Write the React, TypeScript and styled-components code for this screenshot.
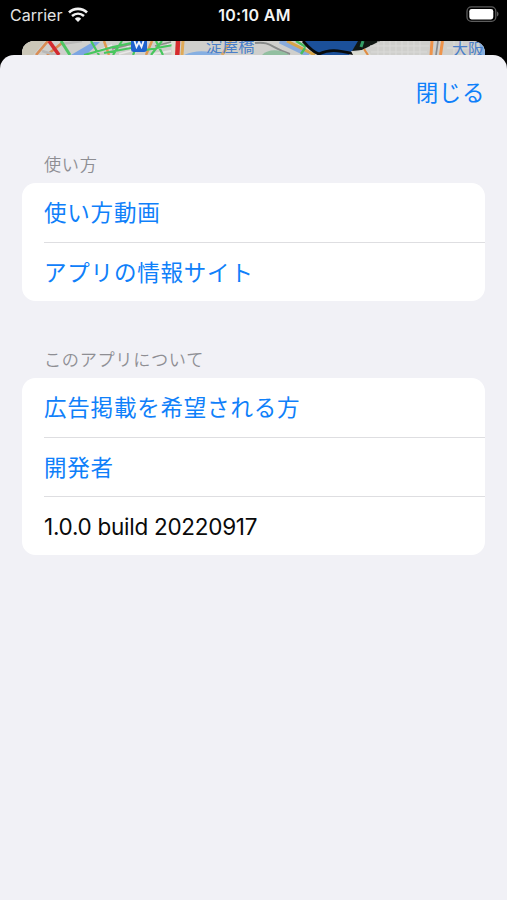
import React from "react";
import styled, { createGlobalStyle } from "styled-components";

const GlobalStyle = createGlobalStyle`
  * { box-sizing: border-box; }
  body {
    margin: 0;
    background: #000;
    font-family: Inter, "Noto Sans CJK JP", sans-serif;
  }
`;

const Screen = styled.div`
  display: flex;
  flex-direction: column;
  width: 507px;
  height: 900px;
  overflow: hidden;
  background: #000;
`;

const StatusBar = styled.header`
  display: grid;
  grid-template-columns: 1fr auto 1fr;
  align-items: center;
  height: 41px;
  padding: 0 8px 11px 10px;
  color: #e4e4e4;
  font-size: 16px;
  line-height: 20px;
`;

const Carrier = styled.div`
  display: flex;
  align-items: center;
  gap: 6px;
  letter-spacing: 0;
`;

const Clock = styled.div`
  color: #f4f4f4;
  font-weight: 600;
  letter-spacing: 0.3px;
`;

const BatterySlot = styled.div`
  display: flex;
  justify-content: flex-end;
  padding-bottom: 2px;
`;

const MapPeek = styled.div`
  flex: none;
  height: 14px;
  margin: 0 22px;
  border-radius: 12px 12px 0 0;
  overflow: hidden;
  background: #c8c8c5;

  svg { display: block; }
`;

const Sheet = styled.main`
  flex: 1;
  padding: 0 22px;
  border-radius: 14px 14px 0 0;
  background: #f1f1f6;
`;

const SheetBar = styled.div`
  display: flex;
  justify-content: flex-end;
  align-items: center;
  height: 75px;
`;

const CloseButton = styled.button`
  padding: 0;
  border: 0;
  background: none;
  color: #0f80fa;
  font: inherit;
  font-size: 22.5px;
  line-height: 30px;
  letter-spacing: 0.6px;
`;

const Section = styled.section<{ $spaced?: boolean }>`
  margin-top: ${({ $spaced }) => ($spaced ? "41.4px" : "18px")};
`;

const SectionTitle = styled.h2`
  height: 35px;
  margin: 0 22px;
  padding-top: 2px;
  color: #8e8e93;
  font-size: 17.2px;
  font-weight: 350;
  line-height: 30px;
  letter-spacing: 0.65px;
`;

const List = styled.ul`
  margin: 0;
  padding: 0;
  list-style: none;
  overflow: hidden;
  border-radius: 13.5px;
  background: #fff;
`;

const Row = styled.li<{ $plain?: boolean }>`
  display: flex;
  align-items: center;
  height: 59.2px;
  margin-left: 22px;
  padding-bottom: ${({ $plain }) => ($plain ? "0" : "3px")};
  color: ${({ $plain }) => ($plain ? "#0a0a0a" : "#0f80fa")};
  font-size: 22.5px;
  letter-spacing: ${({ $plain }) => ($plain ? "-0.27px" : "0.8px")};
  white-space: nowrap;

  & + & { border-top: 1.5px solid #dedee1; }
`;

const WifiIcon = () => (
  <svg width="20" height="16" viewBox="0 0 20 16" fill="none" aria-hidden="true">
    <path d="M1 5.4C6.1.7 13.9.7 19 5.4" stroke="#f2f2f2" strokeWidth="2.7" />
    <path d="M4 9.1C7.6 6 12.4 6 16 9.1" stroke="#f2f2f2" strokeWidth="2.6" />
    <path d="M6.8 11.8a4.8 4.8 0 0 1 6.4 0L10 15Z" fill="#f2f2f2" />
  </svg>
);

const BatteryIcon = () => (
  <svg width="33" height="16" viewBox="0 0 33 16" aria-hidden="true">
    <rect x="1" y=".9" width="28.8" height="14.4" rx="4.4" fill="none" stroke="#5c5c5c" strokeWidth="1.3" />
    <rect x="3.3" y="3" width="24" height="10.4" rx="2.3" fill="#fff" />
    <path d="M31 5.5c2 .8 2 4.2 0 5Z" fill="#5c5c5c" />
  </svg>
);

const MapStrip = () => (
  <svg width="463" height="14" viewBox="22 41 463 14" aria-hidden="true">
    <rect x="22" y="41" width="463" height="14" fill="#cfcfcc" />
    <path d="M22 41H45L33 55H22Z" fill="#cbc7b8" />
    <g fill="none" strokeWidth="2.6">
      <path d="M36 55 48 41M47 55 62 43" stroke="#d98d54" />
      <path d="M42 51 56 55M62 44 82 41" stroke="#b8b8b7" />
      <path d="m49 41 10 14" stroke="#d32a30" strokeWidth="3.6" />
      <path d="m61 41 9 14" stroke="#4fc563" strokeWidth="3" />
    </g>
    <path d="M71 55 93 42h7L86 55Z" fill="#7ca5e2" />
    <path d="m95 52 17-7M119 54l12-3M126 45l10 8M153 54l18-3M167 45l11-3" stroke="#e8e8e7" strokeWidth="1.8" />
    <path d="m112 49 20-5M155 46l16-4" stroke="#8c8c88" strokeWidth="1.4" />
    <path d="m104 41 5 14M146 55l6-14" stroke="#e09a50" strokeWidth="2.5" />
    <g fill="none" stroke="#48c75e" strokeWidth="2.2">
      <path d="M84 55 113 47 131 43M91 41l8 14M113 55l9-14M104 53l27-5M133 55l6-14M151 55 162 41M146 50l27-5M156 41l7 14" />
    </g>
    <rect x="131" y="35" width="16" height="17" rx="3" fill="#1e62cf" />
    <path d="m134.5 41 2 6 2.5-5 2.5 5 2-6" stroke="#eef3fa" strokeWidth="1.8" fill="none" />
    <path d="M173.5 41v14" stroke="#dde0d2" strokeWidth="4" />
    <path d="m178 41-.7 14" stroke="#d62b2d" strokeWidth="4.5" />
    <path d="m183 41-1 14" stroke="#e0aa57" strokeWidth="3" />
    <path d="M184 55c12-5 22-5 38 0Z" fill="#86afe2" />
    <path d="m222 55 9-14" stroke="#dda963" strokeWidth="3" />
    <text x="206" y="52" fill="#4a7fc9" fontSize="16.2" fontFamily="Noto Sans CJK JP">淀屋橋</text>
    <path d="M255 43c16-2 16 5 35 11" fill="none" stroke="#888b8a" strokeWidth="2" />
    <path d="M262 55c6-6 17-6 26-1v1Z" fill="#92bfa0" />
    <path d="m280 41 29 14" stroke="#88abdc" strokeWidth="5" />
    <path d="m287 41 28 14" stroke="#d8a548" strokeWidth="3" />
    <path d="m296 41 10 6M301 54l4-6" stroke="#48bd60" strokeWidth="2.4" />
    <path d="M304 41h55l-6 9-4 5h-31Z" fill="#1b509a" />
    <path d="M303 41c6 7 10 11 16 13 10-5 18-4 36 0" fill="none" stroke="#080b0b" strokeWidth="2.8" />
    <path d="M358 41h22l-18 9-10 1Z" fill="#101713" />
    <path d="m363 41-2 6" stroke="#339d65" strokeWidth="3" />
    <path d="m353 55-2-4 5 1 9-3 6 6Z" fill="#dadbd2" />
    <path d="m364 49 4 6" stroke="#e08c43" strokeWidth="2.2" />
    <path d="M370 46h59M371 52h56M378 41v14M384 41v14M390 41v14M396 41v14M402 41v14M408 41v14M414 41v14M420 41v14" stroke="#dadad8" strokeWidth="1" />
    <path d="m432 41-1 14M442.5 41l-2 14" stroke="#ee934a" strokeWidth="3" />
    <path d="m438 41-2 14" stroke="#888b8e" strokeWidth="1.7" />
    <path d="M447 48h36M454 41v14M462 41v14" stroke="#dcdcda" />
    <path d="M479 41h6v14h-4Z" fill="#88aede" />
    <text x="452" y="54.5" fill="#4a7fc9" fontSize="16" fontFamily="Noto Sans CJK JP">大阪</text>
  </svg>
);

export default function App() {
  return (
    <>
      <GlobalStyle />
      <Screen>
        <StatusBar>
          <Carrier>Carrier<WifiIcon /></Carrier>
          <Clock>10:10 AM</Clock>
          <BatterySlot><BatteryIcon /></BatterySlot>
        </StatusBar>
        <MapPeek><MapStrip /></MapPeek>
        <Sheet>
          <SheetBar><CloseButton>閉じる</CloseButton></SheetBar>
          <Section>
            <SectionTitle>使い方</SectionTitle>
            <List>
              <Row>使い方動画</Row>
              <Row>アプリの情報サイト</Row>
            </List>
          </Section>
          <Section $spaced>
            <SectionTitle>このアプリについて</SectionTitle>
            <List>
              <Row>広告掲載を希望される方</Row>
              <Row>開発者</Row>
              <Row $plain>1.0.0 build 20220917</Row>
            </List>
          </Section>
        </Sheet>
      </Screen>
    </>
  );
}
